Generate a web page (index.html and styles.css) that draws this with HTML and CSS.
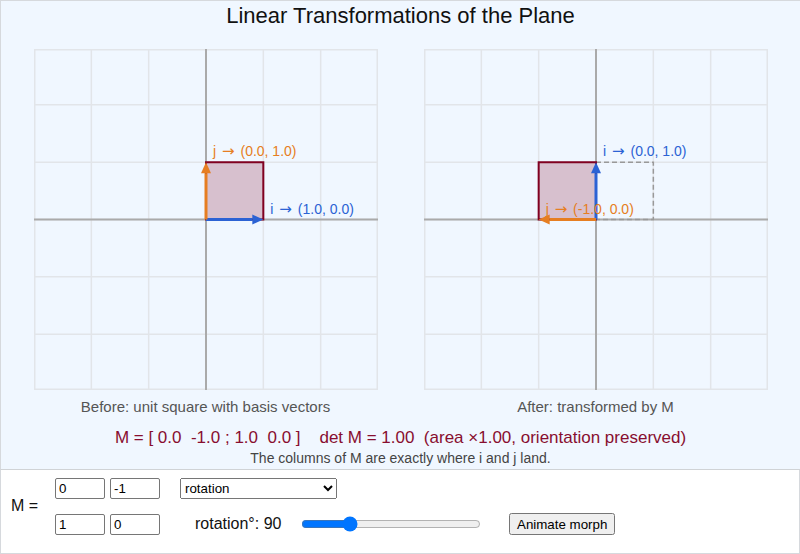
FILE: index.html
```html
<!DOCTYPE html>
<html lang="en">
<head>
  <meta charset="UTF-8">
  <meta name="viewport" content="width=device-width, initial-scale=1.0">
  <title>Linear Transformations of the Plane</title>
  <link rel="stylesheet" href="styles.css">
</head>
<body>
  <div class="stage">
    <h1>Linear Transformations of the Plane</h1>

    <div class="plots">
      <div class="plot">
        <svg id="before" width="344" height="341" viewBox="0 0 344 341"></svg>
        <div class="caption">Before: unit square with basis vectors</div>
      </div>
      <div class="plot">
        <svg id="after" width="344" height="341" viewBox="0 0 344 341"></svg>
        <div class="caption">After: transformed by M</div>
      </div>
    </div>

    <div class="matrix-line" id="matrixLine"></div>
    <div class="note">The columns of M are exactly where i and j land.</div>
  </div>

  <div class="controls">
    <div class="m-label">M =</div>
    <div class="matrix">
      <input type="text" id="a" value="0">
      <input type="text" id="b" value="-1">
      <input type="text" id="c" value="1">
      <input type="text" id="d" value="0">
    </div>
    <div class="options">
      <select id="preset">
        <option value="rotation">rotation</option>
        <option value="shear">shear</option>
        <option value="scale">scale</option>
        <option value="reflection">reflection</option>
        <option value="custom">custom</option>
      </select>
      <div class="param">
        <label for="param" id="paramLabel">rotation°: 90</label>
        <input type="range" id="param" min="0" max="360" value="90">
        <button id="animate">Animate morph</button>
      </div>
    </div>
  </div>

  <script>
    const NS = "http://www.w3.org/2000/svg";
    const W = 344, H = 341;
    const OX = 172, OY = 170.5, U = 57.33;
    const BLUE = "#2b62d4", ORANGE = "#e67e22";

    function el(name, attrs, parent) {
      const e = document.createElementNS(NS, name);
      for (const k in attrs) e.setAttribute(k, attrs[k]);
      parent.appendChild(e);
      return e;
    }

    function px(x, y) {
      return [OX + x * U, OY - y * U];
    }

    function arrow(svg, x, y, color) {
      const [x1, y1] = px(0, 0);
      const [x2, y2] = px(x, y);
      const len = Math.hypot(x2 - x1, y2 - y1);
      if (len < 1) return;
      const ux = (x2 - x1) / len, uy = (y2 - y1) / len;
      const bx = x2 - ux * 11, by = y2 - uy * 11;
      el("line", { x1, y1, x2: bx, y2: by, stroke: color, "stroke-width": 3 }, svg);
      el("polygon", {
        points: `${x2},${y2} ${bx - uy * 5},${by + ux * 5} ${bx + uy * 5},${by - ux * 5}`,
        fill: color
      }, svg);
    }

    // "i → (x, y)" with the arrow set in a font that has a full-width glyph
    function label(svg, x, y, name, text, color) {
      const [tx, ty] = px(x, y);
      const t = el("text", { x: tx + 7, y: ty - 6, fill: color, class: "vec-label" }, svg);
      t.appendChild(document.createTextNode(name + " "));
      el("tspan", { class: "arrow-glyph", dx: 2 }, t).textContent = "→";
      el("tspan", { dx: 2 }, t).textContent = " " + text;
    }

    function drawPlot(svg, m, ghost) {
      svg.innerHTML = "";
      // grid
      for (let k = -3; k <= 3; k++) {
        const gx = OX + k * U, gy = OY + k * U;
        el("line", { x1: gx, y1: 0, x2: gx, y2: H, class: "grid" }, svg);
        if (gy > 0 && gy < H) el("line", { x1: 0, y1: gy, x2: W, y2: gy, class: "grid" }, svg);
      }
      el("rect", { x: 0.75, y: 0.75, width: W - 1.5, height: H - 1.5, class: "grid", fill: "none" }, svg);
      el("line", { x1: OX, y1: 0, x2: OX, y2: H, class: "axis" }, svg);
      el("line", { x1: 0, y1: OY, x2: W, y2: OY, class: "axis" }, svg);

      if (ghost) {
        const [gx, gy] = px(0, 1);
        el("rect", { x: OX, y: gy, width: U, height: U, class: "ghost" }, svg);
      }

      const [a, b, c, d] = m;
      const pts = [[0, 0], [a, c], [a + b, c + d], [b, d]].map(p => px(p[0], p[1]).join(",")).join(" ");
      el("polygon", { points: pts, class: "square" }, svg);

      arrow(svg, a, c, BLUE);
      arrow(svg, b, d, ORANGE);
      label(svg, a, c, "i", `(${a.toFixed(1)}, ${c.toFixed(1)})`, BLUE);
      label(svg, b, d, "j", `(${b.toFixed(1)}, ${d.toFixed(1)})`, ORANGE);
    }

    function readMatrix() {
      return ["a", "b", "c", "d"].map(id => parseFloat(document.getElementById(id).value) || 0);
    }

    function fmt(v) {
      const s = v.toFixed(1);
      return s === "-0.0" ? "0.0" : s;
    }

    function update(m) {
      m = m || readMatrix();
      drawPlot(document.getElementById("before"), [1, 0, 0, 1], false);
      drawPlot(document.getElementById("after"), m, true);
      const [a, b, c, d] = m;
      const det = a * d - b * c;
      const orient = det > 0 ? "orientation preserved" : det < 0 ? "orientation flipped" : "collapsed";
      document.getElementById("matrixLine").textContent =
        `M = [ ${fmt(a)}  ${fmt(b)} ; ${fmt(c)}  ${fmt(d)} ]    det M = ${det.toFixed(2)}  (area ×${Math.abs(det).toFixed(2)}, ${orient})`;
    }

    function setMatrix(m) {
      ["a", "b", "c", "d"].forEach((id, i) => {
        document.getElementById(id).value = +m[i].toFixed(3);
      });
      update();
    }

    function applyPreset() {
      const kind = document.getElementById("preset").value;
      const v = +document.getElementById("param").value;
      const lab = document.getElementById("paramLabel");
      if (kind === "rotation") {
        const r = v * Math.PI / 180;
        lab.textContent = `rotation°: ${v}`;
        setMatrix([Math.cos(r), -Math.sin(r), Math.sin(r), Math.cos(r)]);
      } else if (kind === "shear") {
        const k = (v - 180) / 90;
        lab.textContent = `shear k: ${k.toFixed(2)}`;
        setMatrix([1, k, 0, 1]);
      } else if (kind === "scale") {
        const s = v / 120;
        lab.textContent = `scale: ${s.toFixed(2)}`;
        setMatrix([s, 0, 0, s]);
      } else if (kind === "reflection") {
        const r = v * Math.PI / 360;
        lab.textContent = `mirror angle°: ${v / 2}`;
        setMatrix([Math.cos(2 * r), Math.sin(2 * r), Math.sin(2 * r), -Math.cos(2 * r)]);
      }
    }

    function animate() {
      const target = readMatrix();
      const start = performance.now();
      function step(now) {
        const t = Math.min((now - start) / 1200, 1);
        const e = t * t * (3 - 2 * t);
        update([1 + (target[0] - 1) * e, target[1] * e, target[2] * e, 1 + (target[3] - 1) * e]);
        if (t < 1) requestAnimationFrame(step);
      }
      requestAnimationFrame(step);
    }

    ["a", "b", "c", "d"].forEach(id => document.getElementById(id).addEventListener("input", () => {
      document.getElementById("preset").value = "custom";
      update();
    }));
    document.getElementById("preset").addEventListener("change", applyPreset);
    document.getElementById("param").addEventListener("input", applyPreset);
    document.getElementById("animate").addEventListener("click", animate);

    update();
  </script>
</body>
</html>
```

FILE: styles.css
```css
body {
  margin: 0;
  font-family: "Liberation Sans", Arial, sans-serif;
  color: #111;
}
.stage {
  background: #f0f7ff;
  border-left: 1px solid #d6d9dd;
  border-top: 1px solid #d6d9dd;
  border-bottom: 1px solid #d0d3d6;
  height: 470px;
  box-sizing: border-box;
  padding-top: 2px;
  text-align: center;
}
h1 {
  margin: 0;
  font-size: 22px;
  font-weight: normal;
  line-height: 26px;
}
.plots {
  display: flex;
  justify-content: center;
  gap: 46px;
  margin-top: 20px;
}
.plot svg {
  display: block;
}
.caption {
  margin-top: 8px;
  font-size: 15px;
  line-height: 18px;
  color: #555;
}
.matrix-line {
  margin-top: 12px;
  font-size: 17px;
  line-height: 20px;
  color: #880e2f;
  white-space: pre;
}
.note {
  margin-top: 2px;
  font-size: 14px;
  line-height: 16px;
  color: #444;
}
.grid {
  stroke: #e2e5e9;
  stroke-width: 1.5;
}
.axis {
  stroke: #aaa;
  stroke-width: 2;
}
.ghost {
  fill: none;
  stroke: #999;
  stroke-width: 1.5;
  stroke-dasharray: 5 3;
}
.square {
  fill: rgba(128, 0, 32, 0.22);
  stroke: #800020;
  stroke-width: 2;
}
.vec-label {
  font-family: "Liberation Sans", Arial, sans-serif;
  font-size: 14px;
}
.arrow-glyph {
  font-family: "DejaVu Sans", sans-serif;
  font-size: 15px;
}
.controls {
  display: flex;
  align-items: flex-start;
  height: 84px;
  box-sizing: border-box;
  padding: 8px 0 0 10px;
  border-left: 1px solid #d6d9dd;
  border-right: 1px solid #d6d9dd;
  border-bottom: 1px solid #d6d9dd;
  font-size: 16px;
}
.m-label {
  width: 44px;
  margin-top: 19px;
}
.matrix {
  display: grid;
  grid-template-columns: 50px 50px;
  column-gap: 5px;
  row-gap: 15px;
}
input[type="text"], select, button {
  font-family: "Liberation Sans", Arial, sans-serif;
  font-size: 13.33px;
}
input[type="text"] {
  width: 50px;
  height: 21px;
  box-sizing: border-box;
  padding: 1px 3px;
  margin: 0;
  border: 1px solid #767676;
  border-radius: 2px;
}
.options {
  display: grid;
  grid-template-rows: 21px 21px;
  row-gap: 15px;
  margin-left: 20px;
}
select {
  width: 157px;
  height: 21px;
  margin: 0;
}
.param {
  display: flex;
  align-items: center;
  margin-top: -1px;
}
.param label {
  margin-left: 15px;
  width: 106px;
}
.param input[type="range"] {
  width: 180px;
  margin: 0;
}
.param button {
  margin-left: 28px;
  padding: 1px 6px;
  height: 22px;
}
```
